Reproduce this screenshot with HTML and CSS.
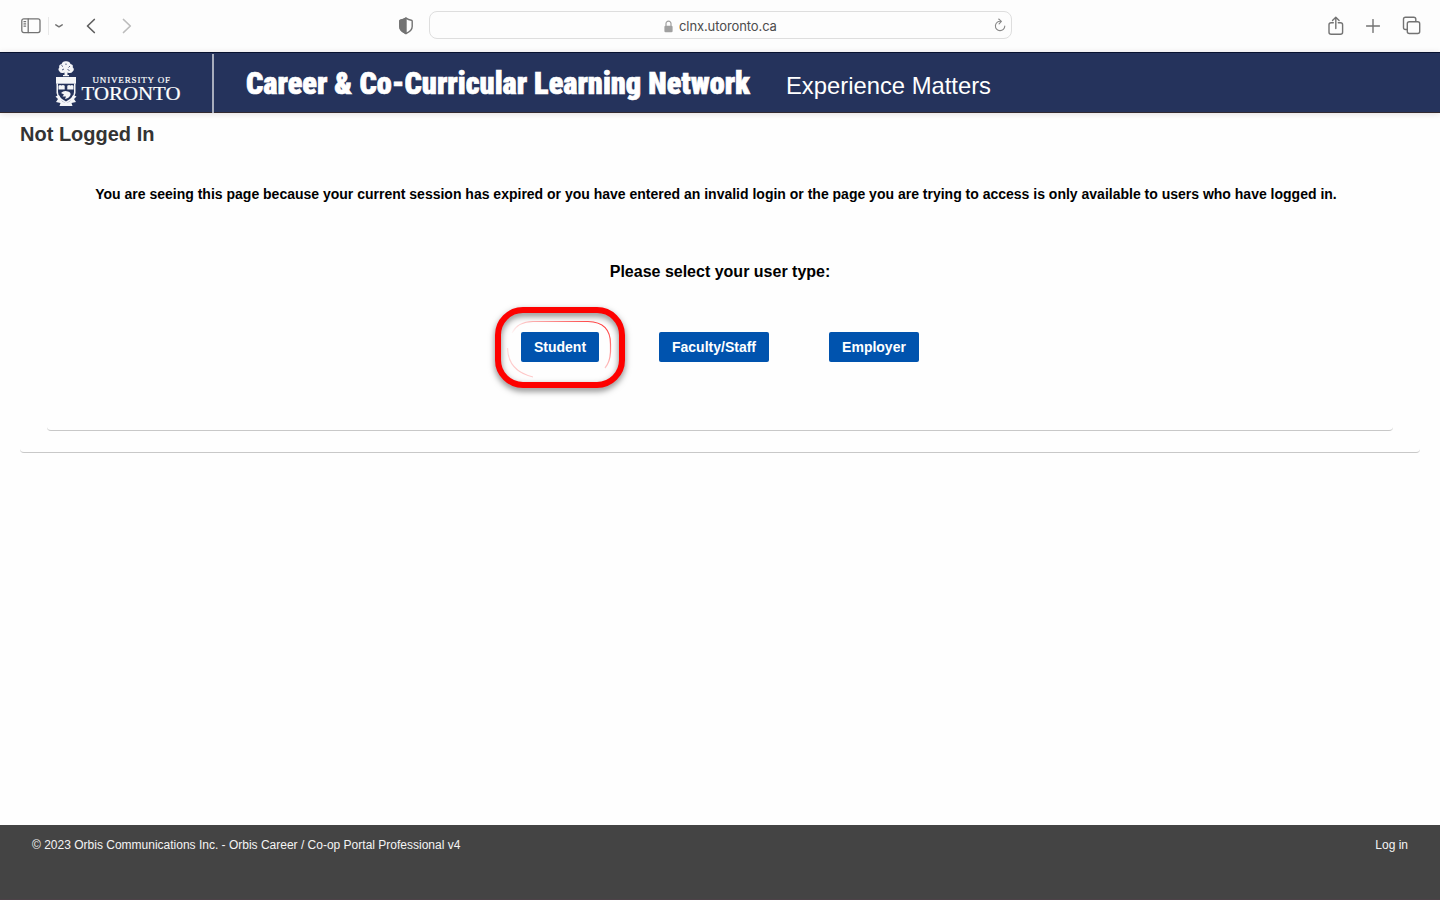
FILE: index.html
```html
<!DOCTYPE html>
<html lang="en">
<head>
<meta charset="utf-8">
<title>Not Logged In</title>
<link rel="stylesheet" href="styles.css">
</head>
<body>
<div class="page">
  <div class="toolbar">
    <div class="tools tools-left">
      <svg class="i-side" width="20" height="16" viewBox="0 0 20 16"><rect x=".8" y=".8" width="18.2" height="13.8" rx="2"/><path d="M7.200 1v13.500M3 3.700h1.600M3 5.900h1.600M3 8.100h1.600"/></svg>
      <span class="split"></span>
      <svg class="i-down" width="8" height="6" viewBox="0 0 8 6"><path d="M.8 1.800L4 3.800l3.200-2"/></svg>
      <svg class="i-back" width="10" height="16" viewBox="0 0 10 16"><path d="M8.300 1.500L1.500 8l6.800 6.500"/></svg>
      <svg class="i-next" width="10" height="16" viewBox="0 0 10 16"><path d="M1.500 1.500L8.300 8l-6.800 6.500"/></svg>
    </div>
    <svg class="i-shield" width="16" height="18" viewBox="0 0 16 18"><path d="M8 1.100Q10.500 2.900 13.400 3.200 14.200 3.300 14.200 4.200V9.500Q14.200 13.800 8 16.500 1.800 13.800 1.800 9.500V4.200Q1.800 3.300 2.600 3.200 5.500 2.900 8 1.100Z"/><path class="solid" d="M8 1.100V16.500Q1.800 13.800 1.800 9.500V4.200Q1.800 3.300 2.600 3.200 5.500 2.900 8 1.100Z"/></svg>
    <div class="address">
      <div class="host">
        <svg class="i-lock" width="9" height="13" viewBox="0 0 9 13"><rect x=".4" y="5.700" width="8.200" height="6.500" rx="1.200"/><path d="M2 6V3.600a2.500 2.500 0 0 1 5 0V6"/></svg>
        <span>clnx.utoronto.ca</span>
      </div>
      <svg class="i-reload" width="12" height="14" viewBox="0 0 12 14"><path d="M6.600 3.300A4.700 4.700 0 1 0 10.800 8M4.700 1l2.700 2.400-2.300 2.500"/></svg>
    </div>
    <div class="tools tools-right">
      <svg width="16" height="20" viewBox="0 0 16 20"><path d="M5.300 6.700H3.200Q1 6.700 1 8.700v7.600q0 2 2.200 2h9.200q2.200 0 2.200-2V8.700q0-2-2.200-2h-2.100M7.800 12.500V1.400M4.500 4.500l3.300-3.300 3.300 3.300"/></svg>
      <svg width="14" height="14" viewBox="0 0 14 14"><path d="M7 .6v12.800M.5 7h13"/></svg>
      <svg width="19" height="19" viewBox="0 0 19 19"><rect x="5.300" y="5.700" width="12.400" height="11.800" rx="2"/><path d="M5 13.500H3.500q-2 0-2-2V3.300q0-2 2-2h8.300q2 0 2 2v2"/></svg>
    </div>
  </div>

  <header class="banner">
    <svg class="crest-logo" width="140" height="56" viewBox="0 0 140 56">
      <g class="crest">
        <path d="M14.500 18V15.500Q11 17 9.500 14.500 7.500 12.500 9.300 10.500 8.500 7.500 11.500 7.300 12.500 4 16 4.300 19.500 4 20.500 7 23.500 7.500 22.700 10.300 25 12.500 22.700 14.500 21 17 17.500 15.500V18H19V19.300H13V18Z"/>
        <path d="M6 20H26V26.700H6Z"/>
        <path d="M7 26.500H8V35Q8 40.500 16 44.500 24 40.500 24 35V26.500H25.500V36Q24.500 42 16 46.500 7.500 42 6.500 36V26.500Z"/>
        <path d="M8.500 28.700Q10 27.500 11.500 28.500 13 27.500 14.700 28.700V32.500H8.500ZM17.300 28.700Q19 27.500 20.500 28.500 22 27.500 23.500 28.700V32.500H17.300Z"/>
        <path d="M11 36Q14 33 18 34.500 21 35 20.500 38 19 41.500 15 42L16 39.500 12.500 39.500 14 37.500Z"/>
        <path d="M5.500 39.500L9 38 12 44 15 46V49H9.500L10.500 46 6 45 8 42ZM26.500 39.500L23 38 20 44 17 46V49H22.500L21.500 46 26 45 24 42Z"/>
        <path d="M14 45.500H18V49H14Z"/>
      </g>
      <path class="crest-ink" d="M8 33.500H24M11.500 8.500l1.500 1M16 6.500v1.500M20 9l-1.500 1.500M12 13l2-1M17.500 12.500l2 1"/>
      <text class="uni" x="42.500" y="25.500" textLength="77.500" lengthAdjust="spacing">UNIVERSITY OF</text>
      <text class="tor" x="31.500" y="43.200" textLength="99" lengthAdjust="spacingAndGlyphs">TORONTO</text>
    </svg>
    <span class="rule"></span>
    <svg class="site-name" width="506" height="50" viewBox="0 0 506 50"><text x="0" y="34" textLength="504" lengthAdjust="spacingAndGlyphs">Career &amp; Co-Curricular Learning Network</text></svg>
    <svg class="tagline" width="208" height="50" viewBox="0 0 208 50"><text x="0" y="34" textLength="205" lengthAdjust="spacingAndGlyphs">Experience Matters</text></svg>
  </header>

  <main class="content">
    <h1>Not Logged In</h1>
    <section class="outer">
      <p class="notice">You are seeing this page because your current session has expired or you have entered an invalid login or the page you are trying to access is only available to users who have logged in.</p>
      <div class="inner">
        <h2>Please select your user type:</h2>
        <div class="choices">
          <div class="marked">
            <a class="btn student">Student</a>
            <svg class="ring" width="150" height="106" viewBox="0 0 150 106">
              <defs><linearGradient id="fade" x1="0" y1="1" x2="1" y2="0"><stop offset="0" stop-color="#f33" stop-opacity=".35"/><stop offset=".42" stop-color="#f33" stop-opacity=".04"/><stop offset="1" stop-color="#f22"/></linearGradient></defs>
              <rect class="ring-line" x="13" y="15" width="124" height="75" rx="25"/>
              <path class="ring-thin" d="M48 82Q23 76 22.500 53M27 38Q33 26.500 48 26.500H103Q125.500 27 125.500 49V57Q125 67 120 73"/>
            </svg>
          </div>
          <a class="btn faculty">Faculty/Staff</a>
          <a class="btn employer">Employer</a>
        </div>
      </div>
    </section>
  </main>

  <footer class="foot">
    <span class="copy">© 2023 Orbis Communications Inc. - Orbis Career / Co-op Portal Professional v4</span>
    <a class="login">Log in</a>
  </footer>
</div>
</body>
</html>
```
FILE: styles.css
```css
* { box-sizing: border-box; }
body { margin: 0; background: #fefefe; font-family: "Liberation Sans", Arial, sans-serif; color: #000; }
.page { display: flex; flex-direction: column; height: 900px; width: 1440px; overflow: hidden; }
svg { display: block; flex: none; }

.toolbar { display: flex; align-items: center; height: 52px; padding-bottom: 1px; flex: none; background: #fdfdfd; }
.toolbar svg { fill: none; stroke: #737373; stroke-width: 1.4; stroke-linecap: round; stroke-linejoin: round; }
.tools { display: flex; align-items: center; }
.tools-left { width: 398px; padding-left: 21px; }
.toolbar .i-side { stroke-width: 1.3; }
.split { width: 1px; height: 18px; background: #e8e8e8; margin: 0 6px 0 7px; }
.toolbar .i-down { stroke-width: 1.5; }
.i-back { margin-left: 23px; }
.toolbar .i-back { stroke: #606060; stroke-width: 1.7; }
.i-next { margin-left: 26px; }
.toolbar .i-next { stroke: #bcbcbc; stroke-width: 1.7; }
.toolbar .solid { fill: #737373; }
.address { width: 583px; height: 28px; margin: 0 0 1px 15px; border: 1px solid #dedede; border-radius: 8px; display: flex; align-items: center; justify-content: flex-end; padding-right: 5px; }
.host { display: flex; align-items: center; gap: 6px; margin-right: 217px; padding-top: 2px; font: 13px/18px Inter, sans-serif; color: #4c4c4c; }
.host span { width: 98px; letter-spacing: -0.1px; white-space: nowrap; }
.toolbar .i-lock { stroke: #a0a0a0; stroke-width: 1.2; }
.i-lock rect { fill: #a0a0a0; stroke: none; }
.toolbar .i-reload { stroke-width: 1.1; stroke: #888; }
.tools-right { margin-left: auto; padding-right: 19px; gap: 22px; }

.banner { display: flex; flex: none; height: 61px; background: #25335c; border-top: 1px solid #081230; border-bottom: 1px solid #332a30; box-shadow: 0 1px 6px rgba(60, 30, 40, .15); }
.crest-logo { margin: 4px 0 0 50px; }
.crest { fill: #f4f5f8; }
.crest-ink { fill: none; stroke: #25335c; stroke-width: .8; }
.crest-logo text { fill: #fff; font-family: "Liberation Serif", serif; stroke: #fff; stroke-width: .2; }
.uni { font-size: 9px; }
.tor { font-size: 19.5px; }
.rule { width: 2px; height: 59px; margin: 1px 0 0 22px; background: #a7adbd; }
.site-name { margin: 7px 0 0 32px; overflow: visible; }
.site-name text { fill: #fff; stroke: #fff; stroke-width: .7; font-family: "Roboto Condensed", Roboto, sans-serif; font-stretch: 75%; font-weight: 900; font-size: 30.5px; }
.tagline { margin: 7px 0 0 34px; overflow: visible; }
.tagline text { fill: #fff; font-size: 24px; }

.content { flex: 1; padding: 0 20px; }
h1 { margin: 9px 0 0; font-size: 20px; line-height: 24px; letter-spacing: 0; color: #333; }
.outer { height: 307px; border-bottom: 1px solid #c8c8c8; border-radius: 4px; padding: 38px 27px 0; }
.notice { margin: 0; padding-right: 8px; font-size: 14px; line-height: 20px; font-weight: bold; text-align: center; white-space: nowrap; }
.inner { height: 206px; margin-top: 21px; border-bottom: 1px solid #c8c8c8; border-radius: 4px; display: flex; flex-direction: column; align-items: center; }
h2 { margin: 37px 0 0; font-size: 16px; line-height: 20px; white-space: nowrap; }
.choices { display: flex; gap: 60px; margin-top: 50px; }
.marked { position: relative; }
.btn { display: block; height: 30px; border-radius: 2px; background: #0053ae; color: #fff; font-size: 14px; font-weight: bold; line-height: 31px; text-align: center; }
.student { width: 78px; }
.faculty { width: 110px; }
.employer { width: 90px; }
.ring { position: absolute; left: -36px; top: -37px; fill: none; overflow: visible; }
.ring-line { stroke: #fe0100; stroke-width: 6; filter: drop-shadow(0 3px 3px rgba(0, 0, 0, .5)); }
.ring-thin { stroke: url(#fade); stroke-width: 1.2; }

.foot { display: flex; justify-content: space-between; flex: none; height: 75px; padding: 13px 32px 0; background: #444; border-bottom: 1px solid #4d4248; color: #f4f4f4; font-size: 12px; line-height: 15px; }
```
